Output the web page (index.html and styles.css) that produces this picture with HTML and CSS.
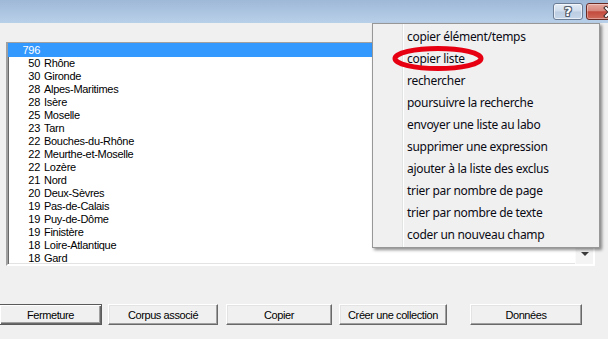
FILE: index.html
```html
<!DOCTYPE html>
<html lang="fr">
<head>
<meta charset="utf-8">
<link rel="stylesheet" href="styles.css">
</head>
<body>
<div class="window">
  <div class="titlebar">
    <div class="cap-btn help"><span>?</span></div>
    <div class="cap-btn close"><svg width="16" height="12" viewBox="0 0 16 12"><path d="M4 2 L12 10 M12 2 L4 10" stroke="#3a2a2a" stroke-width="4" stroke-linecap="square"/><path d="M4 2 L12 10 M12 2 L4 10" stroke="#fff" stroke-width="2" stroke-linecap="square"/></svg></div>
  </div>
  <div class="client">
    <div class="listbox">
      <div class="list">
        <div class="row sel"><span class="num">796</span><span class="name"></span></div>
        <div class="row"><span class="num">50</span><span class="name">Rhône</span></div>
        <div class="row"><span class="num">30</span><span class="name">Gironde</span></div>
        <div class="row"><span class="num">28</span><span class="name">Alpes-Maritimes</span></div>
        <div class="row"><span class="num">28</span><span class="name">Isère</span></div>
        <div class="row"><span class="num">25</span><span class="name">Moselle</span></div>
        <div class="row"><span class="num">23</span><span class="name">Tarn</span></div>
        <div class="row"><span class="num">22</span><span class="name">Bouches-du-Rhône</span></div>
        <div class="row"><span class="num">22</span><span class="name">Meurthe-et-Moselle</span></div>
        <div class="row"><span class="num">22</span><span class="name">Lozère</span></div>
        <div class="row"><span class="num">21</span><span class="name">Nord</span></div>
        <div class="row"><span class="num">20</span><span class="name">Deux-Sèvres</span></div>
        <div class="row"><span class="num">19</span><span class="name">Pas-de-Calais</span></div>
        <div class="row"><span class="num">19</span><span class="name">Puy-de-Dôme</span></div>
        <div class="row"><span class="num">19</span><span class="name">Finistère</span></div>
        <div class="row"><span class="num">18</span><span class="name">Loire-Atlantique</span></div>
        <div class="row"><span class="num">18</span><span class="name">Gard</span></div>
      </div>
      <div class="vscroll"><div class="down"><span class="tri"></span></div></div>
    </div>
    <div class="buttons">
      <div class="btn default b1">Fermeture</div>
      <div class="btn b2">Corpus associé</div>
      <div class="btn b3">Copier</div>
      <div class="btn b4">Créer une collection</div>
      <div class="btn b5">Données</div>
    </div>
  </div>
  <div class="menu">
    <div class="item">copier élément/temps</div>
    <div class="item">copier liste</div>
    <div class="item">rechercher</div>
    <div class="item">poursuivre la recherche</div>
    <div class="item">envoyer une liste au labo</div>
    <div class="item">supprimer une expression</div>
    <div class="item">ajouter à la liste des exclus</div>
    <div class="item">trier par nombre de page</div>
    <div class="item">trier par nombre de texte</div>
    <div class="item">coder un nouveau champ</div>
  </div>
  <svg class="ring" width="100" height="30" viewBox="0 0 100 30"><ellipse cx="48" cy="14.5" rx="43" ry="10" fill="none" stroke="#e60012" stroke-width="5"/></svg>
</div>
</body>
</html>
```
FILE: styles.css
```css
html, body {
  margin: 0;
  padding: 0;
}
body {
  width: 608px;
  height: 339px;
  overflow: hidden;
  background: #f0f0f0;
  font-family: "Liberation Sans", Arial, sans-serif;
}
.window {
  position: relative;
  width: 608px;
  height: 339px;
  overflow: hidden;
  background: #f0f0f0;
}
.titlebar {
  height: 23px;
  background: linear-gradient(#9eb8d7, #b9d0e9);
  display: flex;
  justify-content: flex-end;
  align-items: flex-start;
  padding-top: 3px;
  box-sizing: border-box;
  gap: 3px;
  margin-right: -25px;
}
.cap-btn {
  height: 17px;
  box-sizing: border-box;
  border-radius: 3px;
  display: flex;
  align-items: center;
  justify-content: center;
}
.help {
  width: 30px;
  border: 1px solid #6b7c95;
  background: linear-gradient(#e3ecf6 0%, #cfdcec 48%, #bccde2 52%, #c6d6ea 100%);
  box-shadow: inset 0 0 0 1px rgba(255,255,255,0.6);
}
.help span {
  font-family: "DejaVu Sans", sans-serif;
  font-weight: bold;
  font-size: 13px;
  line-height: 13px;
  color: #fff;
  text-shadow: -1px 0 #55606e, 1px 0 #55606e, 0 -1px #55606e, 0 1px #55606e, 1px 1px #55606e, -1px -1px #55606e, 1px -1px #55606e, -1px 1px #55606e;
}
.close {
  width: 47px;
  border: 1px solid #6a2a24;
  background: linear-gradient(#e5a79e 0%, #d6877c 45%, #c24a3d 52%, #cf6a5a 100%);
  box-shadow: inset 0 0 0 1px rgba(255,255,255,0.35);
}
.close svg {
  display: block;
}
.client {
  padding: 19px 0 0 6px;
}
.listbox {
  width: 589px;
  height: 224px;
  box-sizing: border-box;
  border-style: solid;
  border-width: 2px;
  border-color: #a0a0a0 #ffffff #ffffff #a0a0a0;
  box-shadow: inset 1px 1px 0 #696969, inset -1px -1px 0 #e3e3e3;
  background: #fff;
  display: flex;
}
.list {
  flex: 1;
}
.row {
  height: 13px;
  line-height: 13px;
  font-size: 11px;
  letter-spacing: -0.3px;
  color: #000;
  display: flex;
  white-space: nowrap;
}
.row.sel {
  background: #3399ff;
  color: #fff;
  height: 14px;
  line-height: 14px;
  margin-top: -1px;
}
.num {
  width: 32px;
  text-align: right;
}
.name {
  margin-left: 4px;
}
.vscroll {
  width: 17px;
  background: #f4f4f4;
  border-left: 1px solid #fbfbfb;
  display: flex;
  flex-direction: column;
  justify-content: flex-end;
}
.down {
  height: 17px;
  display: flex;
  align-items: center;
  justify-content: center;
}
.tri {
  width: 0;
  height: 0;
  border-left: 4px solid transparent;
  border-right: 4px solid transparent;
  border-top: 4px solid #3c3c3c;
  margin-top: -4px;
}
.buttons {
  display: flex;
  margin-top: 38px;
  margin-left: -6px;
}
.btn {
  height: 21px;
  box-sizing: border-box;
  background: #f0f0f0;
  border-style: solid;
  border-width: 1px;
  border-color: #ffffff #696969 #696969 #ffffff;
  box-shadow: inset -1px -1px 0 #a0a0a0, inset 1px 1px 0 #e3e3e3;
  font-size: 11px;
  letter-spacing: -0.4px;
  color: #000;
  display: flex;
  align-items: center;
  justify-content: center;
  white-space: nowrap;
}
.btn.default {
  border: 1px solid #5a5a5a;
  box-shadow: inset 1px 1px 0 #fff, inset -1px -1px 0 #696969, inset -2px -2px 0 #a0a0a0;
}
.b1 { width: 103px; margin-left: -1px; }
.b2 { width: 110px; margin-left: 6px; }
.b3 { width: 106px; margin-left: 8px; }
.b4 { width: 108px; margin-left: 7px; }
.b5 { width: 112px; margin-left: 23px; }
.menu {
  position: absolute;
  left: 372px;
  top: 23px;
  width: 228px;
  height: 225px;
  box-sizing: border-box;
  border: 1px solid #979797;
  background: #f0f0f0 linear-gradient(to right, transparent 29px, #e2e3e3 29px, #e2e3e3 30px, #ffffff 30px, #ffffff 31px, transparent 31px);
  box-shadow: 2px 2px 3px rgba(0,0,0,0.45);
  padding: 2px 0;
}
.item {
  height: 22px;
  line-height: 22px;
  padding-left: 34px;
  font-family: "Noto Sans", "Open Sans", sans-serif;
  font-size: 12px;
  letter-spacing: -0.3px;
  color: #0a0a14;
  white-space: nowrap;
}
.ring {
  position: absolute;
  left: 390px;
  top: 44px;
}
```
